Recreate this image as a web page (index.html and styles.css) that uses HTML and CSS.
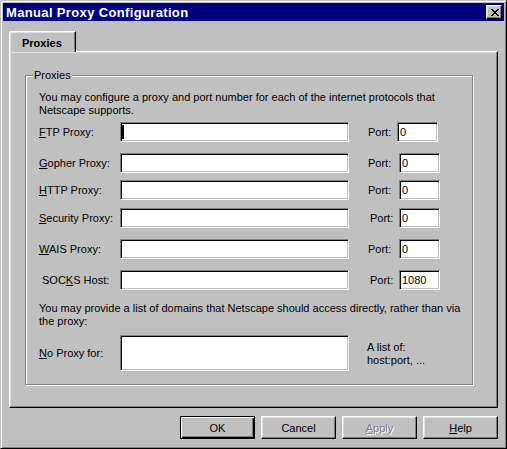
FILE: index.html
```html
<!DOCTYPE html>
<html>
<head>
<meta charset="utf-8">
<title>Manual Proxy Configuration</title>
<link rel="stylesheet" href="styles.css">
</head>
<body>
<div class="window">
  <div class="titlebar">
    <span class="title">Manual Proxy Configuration</span>
    <button class="close" aria-label="Close">
      <svg width="8" height="7" viewBox="0 0 8 7" shape-rendering="crispEdges">
        <path fill="#000" d="M0 0h2v1H0zM6 0h2v1H6zM1 1h2v1H1zM5 1h2v1H5zM2 2h4v1H2zM3 3h2v1H3zM2 4h4v1H2zM1 5h2v1H1zM5 5h2v1H5zM0 6h2v1H0zM6 6h2v1H6z"/>
      </svg>
    </button>
  </div>
  <div class="content">
    <div class="tabs">
      <div class="tab active">Proxies</div>
    </div>
    <div class="panel">
      <div class="group">
        <span class="legend">Proxies</span>
        <p class="note">You may configure a proxy and port number for each of the internet protocols that<br>Netscape supports.</p>
        <div class="rows">
          <div class="row">
            <span class="label"><u>F</u>TP Proxy:</span>
            <div class="field focused"><span class="caret"></span></div>
            <span class="port-label narrow">Port:</span>
            <div class="field port">0</div>
          </div>
          <div class="row gap-lg">
            <span class="label"><u>G</u>opher Proxy:</span>
            <div class="field"></div>
            <span class="port-label">Port:</span>
            <div class="field port">0</div>
          </div>
          <div class="row gap-sm">
            <span class="label"><u>H</u>TTP Proxy:</span>
            <div class="field"></div>
            <span class="port-label">Port:</span>
            <div class="field port">0</div>
          </div>
          <div class="row gap-md">
            <span class="label"><u>S</u>ecurity Proxy:</span>
            <div class="field"></div>
            <span class="port-label shifted">Port:</span>
            <div class="field port">0</div>
          </div>
          <div class="row gap-lg">
            <span class="label"><u>W</u>AIS Proxy:</span>
            <div class="field"></div>
            <span class="port-label">Port:</span>
            <div class="field port">0</div>
          </div>
          <div class="row gap-lg">
            <span class="label indented">SOC<u>K</u>S Host:</span>
            <div class="field"></div>
            <span class="port-label shifted">Port:</span>
            <div class="field port">1080</div>
          </div>
        </div>
        <p class="note note-direct">You may provide a list of domains that Netscape should access directly, rather than via<br>the proxy:</p>
        <div class="row row-noproxy">
          <span class="label"><u>N</u>o Proxy for:</span>
          <div class="field tall"></div>
          <span class="hint">A list of:<br>host:port, ...</span>
        </div>
      </div>
    </div>
    <div class="buttons">
      <button class="btn default">OK</button>
      <button class="btn">Cancel</button>
      <button class="btn disabled"><u>A</u>pply</button>
      <button class="btn"><u>H</u>elp</button>
    </div>
  </div>
</div>
</body>
</html>
```

FILE: styles.css
```css
* {
  box-sizing: border-box;
}

html, body {
  margin: 0;
  padding: 0;
  background: #c0c0c0;
}

body {
  font-family: "Liberation Sans", Arial, sans-serif;
  font-size: 11px;
  line-height: 13px;
  color: #000;
}

.window {
  width: 507px;
  height: 449px;
  background: #c0c0c0;
  border: 1px solid;
  border-color: #c0c0c0 #000 #000 #c0c0c0;
  box-shadow: inset 1px 1px 0 #fff, inset -1px -1px 0 #808080;
  padding: 2px;
  display: flex;
  flex-direction: column;
}

.titlebar {
  height: 18px;
  background: #000080;
  display: flex;
  align-items: center;
  justify-content: space-between;
  padding: 0 2px 0 3px;
  flex: none;
}

.title {
  color: #fff;
  font-weight: bold;
  font-size: 13px;
  letter-spacing: 0.35px;
  white-space: nowrap;
}

.close {
  width: 16px;
  height: 14px;
  padding: 0;
  margin: 0;
  background: #c0c0c0;
  border: 1px solid;
  border-color: #fff #000 #000 #fff;
  box-shadow: inset -1px -1px 0 #808080, inset 1px 1px 0 #dfdfdf;
  display: flex;
  align-items: center;
  justify-content: center;
}

.close svg {
  display: block;
  margin-left: 1px;
}

.content {
  flex: 1;
  padding: 10px 6px 0 6px;
  display: flex;
  flex-direction: column;
}

.tabs {
  display: flex;
  height: 20px;
  position: relative;
  z-index: 1;
}

.tab {
  width: 67px;
  height: 21px;
  background: #c0c0c0;
  border-top: 1px solid #fff;
  border-left: 1px solid #fff;
  border-right: 1px solid #000;
  border-top-left-radius: 2px;
  box-shadow: inset -1px 0 0 #808080, inset 1px 1px 0 #dfdfdf;
  font-weight: bold;
  padding: 5px 0 0 12px;
}

.panel {
  height: 357px;
  border: 1px solid;
  border-color: #fff #000 #000 #fff;
  box-shadow: inset -1px -1px 0 #808080, inset 1px 1px 0 #dfdfdf;
  padding: 23px 0 0 15px;
  flex: none;
}

.group {
  position: relative;
  width: 448px;
  height: 310px;
  border: 1px solid #808080;
  box-shadow: inset 1px 1px 0 #fff, 1px 1px 0 #fff;
  padding: 15px 0 0 13px;
}

.legend {
  position: absolute;
  top: -7px;
  left: 7px;
  padding: 0 1px;
  background: #c0c0c0;
}

.note {
  margin: 0;
  white-space: nowrap;
}

.rows {
  display: flex;
  flex-direction: column;
  margin-top: 5px;
}

.row {
  display: flex;
  align-items: center;
  height: 20px;
}

.row.gap-lg { margin-top: 11px; }
.row.gap-md { margin-top: 8px; }
.row.gap-sm { margin-top: 7px; }

.label {
  width: 81px;
  flex: none;
  white-space: nowrap;
}

.label.indented {
  padding-left: 3px;
}

.field {
  width: 229px;
  height: 20px;
  flex: none;
  background: #fff;
  border: 1px solid;
  border-color: #808080 #fff #fff #808080;
  box-shadow: inset 1px 1px 0 #000, inset -1px -1px 0 #c0c0c0;
  display: flex;
  align-items: center;
  padding-left: 2px;
}

.caret {
  display: block;
  width: 2px;
  height: 14px;
  background: #000;
  margin-left: -1px;
}

.port-label {
  width: 31px;
  margin-left: 19px;
  flex: none;
}

.port-label.narrow {
  width: 29px;
}

.port-label.shifted {
  padding-left: 2px;
}

.field.port {
  width: 41px;
}

.note-direct {
  margin-top: 12px;
}

.row-noproxy {
  margin-top: 7px;
  height: 36px;
}

.field.tall {
  height: 36px;
}

.hint {
  margin-left: 18px;
  margin-top: 1px;
}

.buttons {
  display: flex;
  justify-content: flex-end;
  gap: 6px;
  margin-top: 8px;
}

.btn {
  width: 75px;
  height: 23px;
  padding: 0;
  margin: 0;
  font-family: "Liberation Sans", Arial, sans-serif;
  font-size: 11px;
  color: #000;
  background: #c0c0c0;
  border: 1px solid;
  border-color: #fff #000 #000 #fff;
  box-shadow: inset -1px -1px 0 #808080, inset 1px 1px 0 #dfdfdf;
}

.btn.default {
  border-color: #000;
  box-shadow: inset 1px 1px 0 #fff, inset -1px -1px 0 #000, inset -2px -2px 0 #808080;
}

.btn.disabled {
  color: #808080;
  text-shadow: 1px 1px 0 #fff;
}
```
